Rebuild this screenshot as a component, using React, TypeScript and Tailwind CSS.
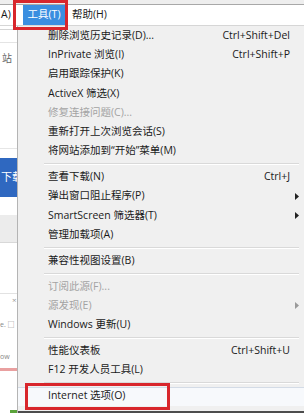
import React from "react";

type Item = { label: string; shortcut?: string; arrow?: boolean; disabled?: boolean; highlight?: boolean };

const groups: Item[][] = [
  [
    { label: "删除浏览历史记录(D)...", shortcut: "Ctrl+Shift+Del" },
    { label: "InPrivate 浏览(I)", shortcut: "Ctrl+Shift+P" },
    { label: "启用跟踪保护(K)" },
    { label: "ActiveX 筛选(X)" },
    { label: "修复连接问题(C)...", disabled: true },
    { label: "重新打开上次浏览会话(S)" },
    { label: "将网站添加到“开始”菜单(M)" },
  ],
  [
    { label: "查看下载(N)", shortcut: "Ctrl+J" },
    { label: "弹出窗口阻止程序(P)", arrow: true },
    { label: "SmartScreen 筛选器(T)", arrow: true },
    { label: "管理加载项(A)" },
  ],
  [{ label: "兼容性视图设置(B)" }],
  [
    { label: "订阅此源(F)...", disabled: true },
    { label: "源发现(E)", disabled: true, arrow: true },
    { label: "Windows 更新(U)" },
  ],
  [
    { label: "性能仪表板", shortcut: "Ctrl+Shift+U" },
    { label: "F12 开发人员工具(L)" },
  ],
  [{ label: "Internet 选项(O)", highlight: true }],
];

function Row({ item }: { item: Item }) {
  const color = item.disabled ? "text-[#a3a3a3]" : "text-[#1a1a1a]";
  return (
    <div
      className={`flex h-[19.2px] items-center pl-[30px] ${color} ${
        item.highlight ? "bg-[#f7f9fc] shadow-[inset_0_1px_0_#d3dbe6]" : ""
      }`}
    >
      <span className="flex-1 whitespace-nowrap">{item.label}</span>
      {item.shortcut && <span className="whitespace-nowrap">{item.shortcut}</span>}
      <span className="flex w-[14px] items-center pl-[5px]">
        {item.arrow && (
          <svg width="4" height="7" viewBox="0 0 4 7">
            <path d="M0 0 L4 3.5 L0 7 Z" fill={item.disabled ? "#9a9a9a" : "#222"} />
          </svg>
        )}
      </span>
    </div>
  );
}

function Sep() {
  return (
    <div className="flex h-[6.8px] flex-col justify-center pl-[26px] pr-[5px]">
      <div className="h-px bg-[#d9d9d9]" />
      <div className="h-px bg-white" />
    </div>
  );
}

export default function App() {
  return (
    <div
      className="relative h-[413px] w-[304px] overflow-hidden bg-white text-[10.5px]"
      style={{ fontFamily: "'Open Sans', 'Noto Sans CJK SC', sans-serif" }}
    >
      {/* menu bar */}
      <div className="h-[4px] bg-[#eeeeee]" />
      <div className="flex h-[22px] items-center border-y border-t-[#a8a8a8] border-b-[#d6d6d6] bg-white text-[#1a1a1a]">
        <span className="w-[23px] pl-[1px]">A)</span>
        <span className="flex h-[20px] w-[42px] items-center justify-center bg-[#3a8ee0] text-white">工具(T)</span>
        <span className="pl-[7px]">帮助(H)</span>
      </div>

      <div className="flex h-[387px]">
        {/* page content behind */}
        <div className="flex w-[17px] flex-col bg-white text-[10px]">
          <div className="h-[3px]" />
          <div className="h-px bg-[#d4d4d4]" />
          <div className="h-[12px]" />
          <div className="h-px bg-[#e4e4e4]" />
          <div className="h-[8px]" />
          <div className="pl-[2px] leading-[14px] text-[#666]">站</div>
          <div className="h-[83px]" />
          <div className="h-px bg-[#e6e6e6]" />
          <div className="h-[9px]" />
          <div className="flex h-[39px] items-center overflow-hidden whitespace-nowrap bg-[#2f68c0] pl-[1px] text-[11px] text-white">
            下载
          </div>
          <div className="h-[18px]" />
          <div className="h-[27px] bg-[#ececec]" />
          <div className="h-px bg-[#d8d8d8]" />
          <div className="h-[50px]" />
          <div className="h-px bg-[#e2e2e2]" />
          <div className="pl-[12px] text-[8px] leading-[12px] text-[#999]">×</div>
          <div className="h-[14px]" />
          <div className="whitespace-nowrap text-[7px] leading-[10px] text-[#888]">e. □</div>
          <div className="h-[22px]" />
          <div className="whitespace-nowrap text-[7px] leading-[10px] text-[#888]">ow</div>
          <div className="h-[6px]" />
          <div className="h-[3px] bg-[#e9a0a0]" />
          <div className="flex-1" />
          <div className="ml-[10px] h-[3px] bg-[#5aa33a]" />
        </div>

        {/* dropdown menu */}
        <div className="flex flex-1 flex-col border-l border-[#b4b4b4] bg-[#f0f0f0]">
          <div className="h-[0.4px]" />
          {groups.map((g, gi) => (
            <React.Fragment key={gi}>
              {gi > 0 && <Sep />}
              {g.map((it, i) => (
                <Row key={i} item={it} />
              ))}
            </React.Fragment>
          ))}
          <div className="flex-1" />
          <div className="h-[2px] bg-[#4d4d4d]" />
        </div>
      </div>

      {/* red annotation boxes */}
      <div className="absolute left-[13px] top-0 h-[30px] w-[55px] border-[3px] border-[#d8262c]" />
      <div className="absolute left-[25px] top-[383px] h-[27px] w-[145px] border-[3px] border-[#d8262c]" />
    </div>
  );
}
